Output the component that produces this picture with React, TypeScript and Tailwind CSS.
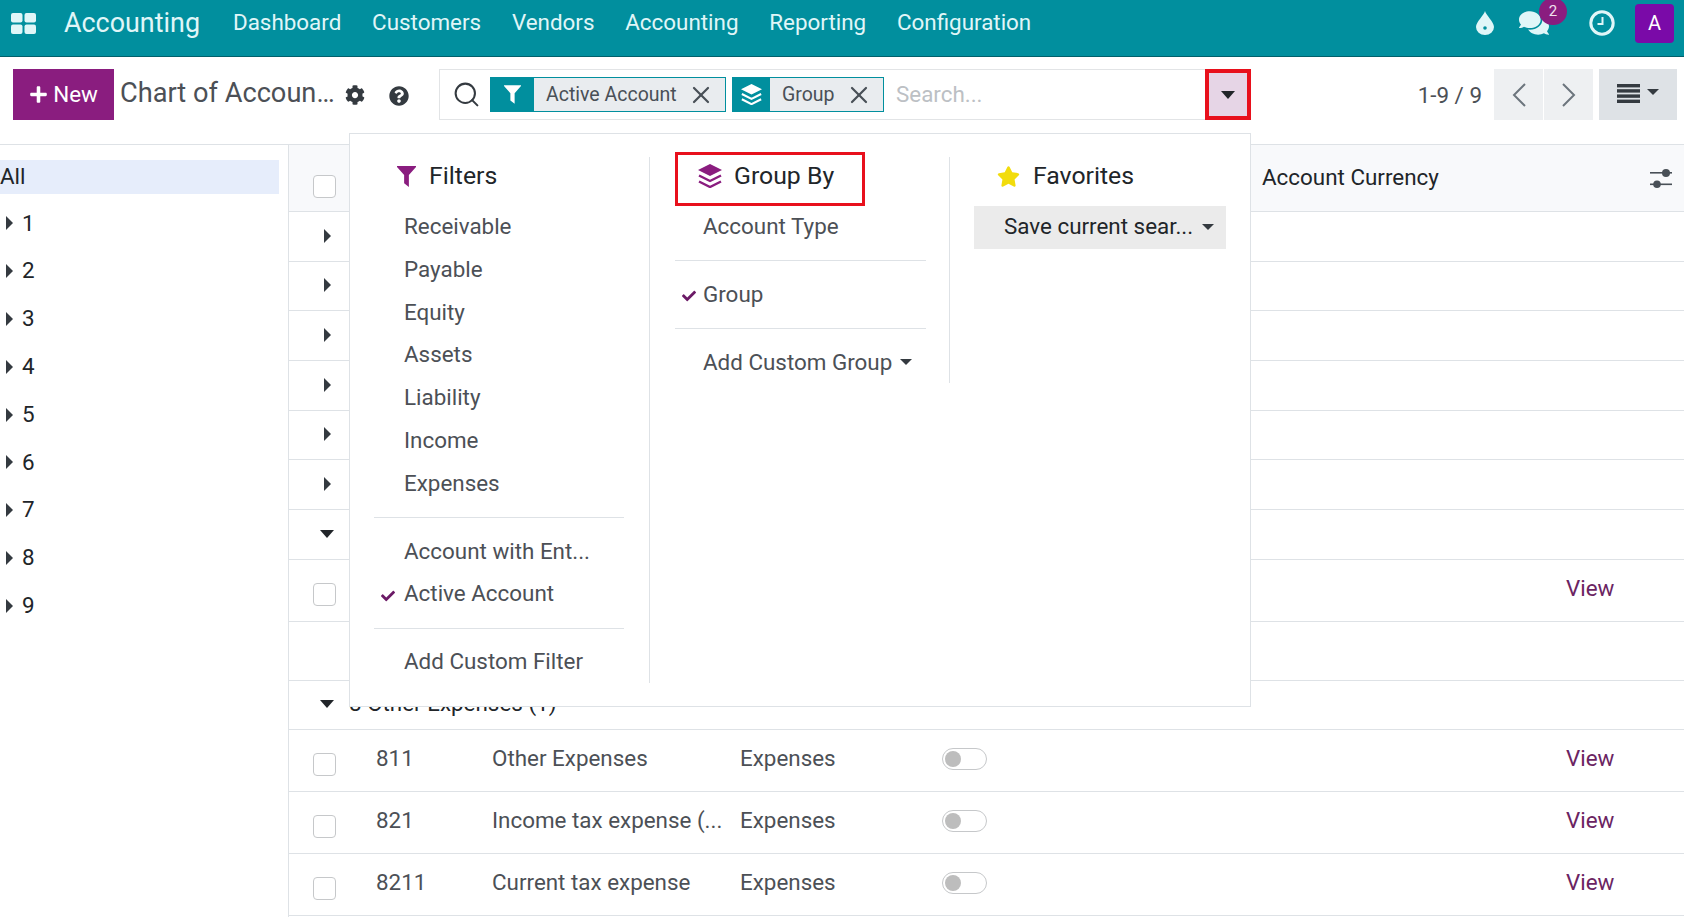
import React from 'react';
import { FaCheck, FaCog, FaComments, FaPlus, FaQuestionCircle, FaStar } from 'react-icons/fa';
import { Search, X } from 'lucide-react';

const navLinks = ['Dashboard', 'Customers', 'Vendors', 'Accounting', 'Reporting', 'Configuration'];
const sideItems = ['1', '2', '3', '4', '5', '6', '7', '8', '9'];
const filterItems = ['Receivable', 'Payable', 'Equity', 'Assets', 'Liability', 'Income', 'Expenses'];
const accounts = [
    { code: '811', name: 'Other Expenses' },
    { code: '821', name: 'Income tax expense (...' },
    { code: '8211', name: 'Current tax expense' },
];

const CaretRight = () => <span className="inline-block border-y-[7px] border-l-[7px] border-y-transparent border-l-[#343a40]" />;
const CaretDown = () => <span className="inline-block border-x-[7px] border-t-[8px] border-x-transparent border-t-[#212529]" />;
const CaretSmall = () => <span className="inline-block border-x-[6px] border-t-[6px] border-x-transparent border-t-[#343a40]" />;

const FilterIcon = ({ className }: { className: string }) => (
    <svg viewBox="0 0 20 22" className={className} fill="currentColor">
        <path d="M0 0h20v1L12.5 9.5V22L7.5 18V9.5L0 1z" />
    </svg>
);

const LayersIcon = ({ className }: { className: string }) => (
    <svg viewBox="0 0 24 24" className={className} fill="currentColor" stroke="currentColor">
        <path d="M12 0l12 6-12 6L0 6z" stroke="none" />
        <path d="M1 11.5l11 5.5 11-5.5M1 17.5l11 5.5 11-5.5" fill="none" strokeWidth="2.4" />
    </svg>
);

const Checkbox = ({ className = '' }: { className?: string }) => (
    <span className={`block w-[23px] h-[23px] rounded-[4px] border border-[#c6c8ca] bg-white ${className}`} />
);

const Facet = ({ icon, label, width, iconWidth }: { icon: React.ReactNode; label: string; width: string; iconWidth: string }) => (
    <div className={`flex h-[35px] ${width}`}>
        <span className={`flex items-center justify-center bg-[#018f9e] text-white ${iconWidth}`}>{icon}</span>
        <span className="flex flex-1 items-center justify-between border border-l-0 border-[#018f9e] bg-[#e9ecef] pl-[12px] pr-[10px] text-[19.5px] text-[#495057]">
            {label}
            <X size={28} strokeWidth={1.9} className="text-[#495057]" />
        </span>
    </div>
);

const MenuItem = ({ label, checked, caret, x, left }: { label: string; checked?: boolean; caret?: boolean; x: string; left?: string }) => (
    <div className={`relative flex h-[42.8px] items-center text-[#4c5056] ${x}`}>
        {checked && <FaCheck size={14} className={`absolute top-[16px] text-[#6b1a66] ${left}`} />}
        {label}
        {caret && <span className="ml-[8px] inline-flex"><CaretSmall /></span>}
    </div>
);

const GroupRow = ({ open, h = 'h-[49.7px]', children }: { open?: boolean; h?: string; children?: React.ReactNode }) => (
    <div className={`flex ${h} items-center border-b border-[#dee2e6] pb-[1.5px] text-[#212529]`}>
        <span className="flex w-[60px] justify-center pl-[16px]">{open ? <CaretDown /> : <CaretRight />}</span>
        {children}
    </div>
);

const AccountRow = ({ code, name }: { code: string; name: string }) => (
    <div className="flex h-[62px] items-center border-b border-[#dee2e6] pb-[4px] text-[#4c5056]">
        <span className="w-[87px] pl-[24px]"><Checkbox className="mt-[13px]" /></span>
        <span className="w-[116px]">{code}</span>
        <span className="w-[248px] whitespace-nowrap">{name}</span>
        <span className="w-[202px]">Expenses</span>
        <span className="w-[624px]">
            <span className="mt-[2px] flex h-[22px] w-[45px] items-center rounded-full border border-[#c6c8ca] pl-[2px]">
                <span className="h-[16px] w-[16px] rounded-full bg-[#bdbdbd]" />
            </span>
        </span>
        <span className="text-[#6b2462]">View</span>
    </div>
);

const App: React.FC = () => {
    return (
        <div className="relative h-[917px] w-[1684px] overflow-hidden bg-white text-[22.4px] font-['Roboto',sans-serif] text-[#212529]">
            {/* top bar */}
            <header className="flex h-[57px] items-center border-b border-[#01606b] bg-[#018f9e] pb-[10px] text-[#e0f6f8]">
                <svg viewBox="0 0 25 21" className="ml-[11px] h-[21px] w-[25px]" fill="currentColor">
                    <rect x="0" y="0" width="11.5" height="9.5" rx="2" />
                    <rect x="13.5" y="0" width="11.5" height="9.5" rx="2" />
                    <rect x="0" y="11.5" width="11.5" height="9.5" rx="2" />
                    <rect x="13.5" y="11.5" width="11.5" height="9.5" rx="2" />
                </svg>
                <span className="ml-[28px] text-[26.9px]">Accounting</span>
                <nav className="ml-[33px] flex gap-[30.8px]">
                    {navLinks.map((l) => <span key={l}>{l}</span>)}
                </nav>
                <div className="ml-auto flex items-center pr-[10px]">
                    <svg viewBox="0 0 18 24" className="h-[24px] w-[18px]" fill="currentColor">
                        <path d="M9 0c1 4 9 11 9 16a9 8 0 0 1-18 0C0 11 8 4 9 0z" />
                        <circle cx="9" cy="17" r="1.8" fill="#018f9e" />
                    </svg>
                    <span className="relative ml-[25px]">
                        <FaComments size={30} />
                        <span className="absolute left-[20px] top-[-10px] flex h-[27px] w-[28px] items-center justify-center rounded-full bg-[#8a1d7f] text-[15px] text-[#f0e0ee]">2</span>
                    </span>
                    <svg viewBox="0 0 26 26" className="ml-[40px] h-[26px] w-[26px]" fill="none" stroke="currentColor">
                        <circle cx="13" cy="13" r="11.2" strokeWidth="3" />
                        <path d="M13.5 7v7H8.5" strokeWidth="2" />
                    </svg>
                    <span className="ml-[20px] flex h-[39px] w-[39px] items-center justify-center rounded-[4px] bg-[#7a0aa8] text-[20px] text-white">A</span>
                </div>
            </header>

            {/* control panel */}
            <div className="flex h-[87px] items-start pt-[12px] pl-[13px] pr-[7px]">
                <button className="flex h-[51px] w-[101px] items-center justify-center gap-[5px] bg-[#8a1d7f] text-white">
                    <FaPlus size={19} />New
                </button>
                <span className="ml-[6px] w-[212px] whitespace-nowrap text-[27.2px] leading-[49px] text-[#4c5056]">Chart of Accoun…</span>
                <FaCog size={20} className="ml-[13px] mt-[16px] text-[#343a40]" />
                <FaQuestionCircle size={20} className="ml-[24px] mt-[17px] text-[#343a40]" />
                <div className="ml-[30px] flex h-[51px] w-[812px] items-center border border-[#e2e4e6] pl-[12px]">
                    <Search size={29} strokeWidth={1.7} className="text-[#343a40]" />
                    <div className="ml-[9px] flex gap-[6px]">
                        <Facet icon={<FilterIcon className="h-[19px] w-[17px]" />} label="Active Account" width="w-[236px]" iconWidth="w-[44px]" />
                        <Facet icon={<LayersIcon className="h-[21px] w-[21px]" />} label="Group" width="w-[152px]" iconWidth="w-[38px]" />
                    </div>
                    <span className="ml-[12px] text-[#bcc0c4]">Search...</span>
                    <span className="ml-auto mr-[-1px] mt-[-2px] mb-[-2px] flex h-[51px] w-[46px] items-center justify-center border-[4px] border-[#e8101c] bg-[#e6d5e6]">
                        <CaretDown />
                    </span>
                </div>
                <span className="ml-auto mt-[10px] text-[#4c5056]">1-9 / 9</span>
                <div className="ml-[12px] flex gap-[1px]">
                    <span className="flex h-[51px] w-[49px] items-center justify-center bg-[#eef0f2]">
                        <svg viewBox="0 0 14 24" className="h-[24px] w-[14px]" fill="none" stroke="#6c757d" strokeWidth="2"><path d="M13 1 2 12l11 11" /></svg>
                    </span>
                    <span className="flex h-[51px] w-[49px] items-center justify-center bg-[#eef0f2]">
                        <svg viewBox="0 0 14 24" className="h-[24px] w-[14px]" fill="none" stroke="#6c757d" strokeWidth="2"><path d="M1 1l11 11L1 23" /></svg>
                    </span>
                </div>
                <span className="ml-[6px] flex h-[51px] w-[78px] items-center justify-center gap-[7px] bg-[#dee2e6] pb-[2px]">
                    <svg viewBox="0 0 23 19" className="h-[19px] w-[23px]" fill="#343a40">
                        <rect y="0" width="23" height="3.4" /><rect y="5.2" width="23" height="3.4" /><rect y="10.4" width="23" height="3.4" /><rect y="15.6" width="23" height="3.4" />
                    </svg>
                    <span className="mb-[3px] inline-flex"><CaretSmall /></span>
                </span>
            </div>

            {/* body */}
            <div className="flex border-t border-[#dee2e6]">
                <aside className="h-[773px] w-[289px] shrink-0 border-r border-[#dee2e6] pr-[9px] pt-[15px]">
                    <div className="flex h-[34px] items-center bg-[#e6edfb]">All</div>
                    <div className="mt-[5.5px]">
                        {sideItems.map((n) => (
                            <div key={n} className="flex h-[47.8px] items-center gap-[9px] pl-[6px]">
                                <CaretRight />{n}
                            </div>
                        ))}
                    </div>
                </aside>
                <main className="flex-1">
                    <div className="flex h-[67px] items-center border-b border-[#dee2e6] bg-[#f8f9fb]">
                        <span className="pl-[24px]"><Checkbox className="mt-[17px]" /></span>
                        <span className="ml-[926px]">Account Currency</span>
                        <svg viewBox="0 0 22 19" className="ml-auto mr-[12px] h-[19px] w-[22px]" fill="#495057">
                            <rect y="3" width="22" height="1.6" />
                            <rect y="14.5" width="22" height="1.6" />
                            <circle cx="16" cy="4" r="4" />
                            <circle cx="7" cy="15.2" r="3.8" />
                        </svg>
                    </div>
                    {[0, 1, 2, 3, 4, 5].map((i) => <GroupRow key={i} />)}
                    <GroupRow open />
                    <div className="flex h-[62px] items-center border-b border-[#dee2e6] pb-[4px] text-[#6b2462]">
                        <span className="pl-[24px]"><Checkbox className="mt-[13px]" /></span>
                        <span className="ml-[1230px]">View</span>
                    </div>
                    <div className="h-[59px] border-b border-[#dee2e6]" />
                    <GroupRow open h="h-[49px]"><span className="whitespace-nowrap">8 Other Expenses (1)</span></GroupRow>
                    {accounts.map((a) => <AccountRow key={a.code} {...a} />)}
                </main>
            </div>

            {/* search dropdown */}
            <div className="absolute left-[349px] top-[133px] flex h-[574px] w-[902px] border border-[#dee2e6] bg-white pt-[23px]">
                <div className="h-[526px] w-[300px] border-r border-[#dee2e6] pl-[24px] pr-[25px]">
                    <div className="flex h-[38px] items-center gap-[13px] pl-[23px] text-[24.8px]">
                        <FilterIcon className="h-[21px] w-[19px] text-[#8a1d7f]" />Filters
                    </div>
                    <div className="mt-[10.5px]">
                        {filterItems.map((f) => <MenuItem key={f} label={f} x="pl-[30px]" />)}
                    </div>
                    <div className="my-[12px] border-t border-[#dee2e6]" />
                    <MenuItem label="Account with Ent..." x="pl-[30px]" />
                    <MenuItem label="Active Account" checked x="pl-[30px]" left="left-[7px]" />
                    <div className="my-[12px] border-t border-[#dee2e6]" />
                    <MenuItem label="Add Custom Filter" x="pl-[30px]" />
                </div>
                <div className="relative h-[226px] w-[300px] border-r border-[#dee2e6] pl-[25px] pr-[23px]">
                    <div className="flex h-[38px] items-center gap-[12px] pl-[23px] text-[24.8px]">
                        <LayersIcon className="h-[24px] w-[24px] text-[#8a1d7f]" />Group By
                    </div>
                    <div className="absolute left-[25px] top-[-5px] h-[54px] w-[190px] border-[3px] border-[#e8101c]" />
                    <div className="mt-[10.5px]">
                        <MenuItem label="Account Type" x="pl-[28px]" />
                    </div>
                    <div className="my-[12px] border-t border-[#dee2e6]" />
                    <MenuItem label="Group" checked x="pl-[28px]" left="left-[7px]" />
                    <div className="my-[12px] border-t border-[#dee2e6]" />
                    <MenuItem label="Add Custom Group" caret x="pl-[28px]" />
                </div>
                <div className="pl-[24px]">
                    <div className="flex h-[38px] items-center gap-[13px] pl-[23px] text-[24.8px]">
                        <FaStar size={23} className="text-[#f2dc0c]" />Favorites
                    </div>
                    <div className="mt-[11px] flex h-[43px] w-[252px] items-center gap-[9px] bg-[#ebebeb] pb-[1px] pl-[30px]">
                        Save current sear...<CaretSmall />
                    </div>
                </div>
            </div>
        </div>
    );
};

export default App;
